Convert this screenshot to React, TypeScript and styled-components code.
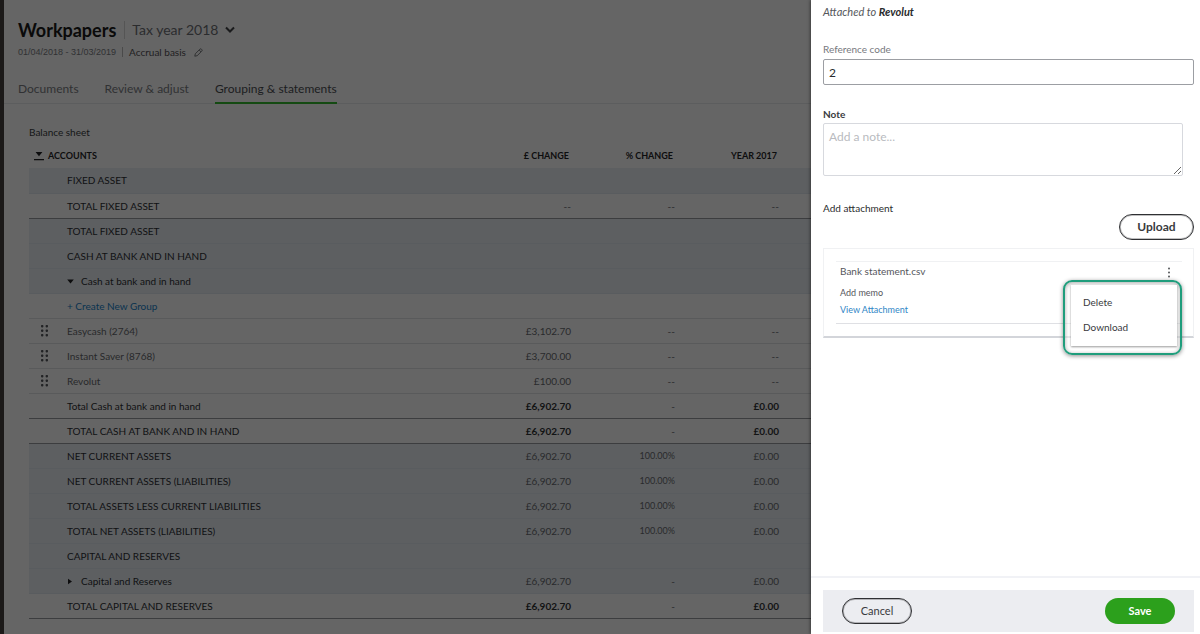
import React from 'react';
import styled, { createGlobalStyle, css } from 'styled-components';

const GlobalStyle = createGlobalStyle`
  * { box-sizing: border-box; }
  body {
    margin: 0;
    font-family: Lato, 'Liberation Sans', sans-serif;
    font-size: 10px;
    line-height: 16px;
    color: #2a2b2d;
  }
  button, input, textarea { font: inherit; color: inherit; }
`;

const Shell = styled.div`
  display: flex;
  min-height: 100vh;
  background: #656565;
`;

/* Dimmed page behind the drawer */
const Page = styled.main`
  flex: 1;
  min-width: 0;
  border-left: 4px solid #1b1918;
  color: #141516;
`;

const PageHeader = styled.header`
  padding: 18px 14px 0;
`;

const TitleRow = styled.div`
  display: flex;
  align-items: center;
  height: 24px;
`;

const Title = styled.h1`
  margin: 0;
  padding-right: 8px;
  font-size: 18px;
  line-height: 24px;
  font-weight: 700;
  color: #0a0a0a;
`;

const YearButton = styled.button`
  display: flex;
  align-items: center;
  gap: 7px;
  height: 18px;
  padding: 0 0 0 7px;
  border: 0;
  border-left: 1px solid #555;
  background: none;
  font-size: 14px;
  color: #2b2c2e;
`;

const MetaRow = styled.div`
  display: flex;
  align-items: center;
  height: 20px;
  color: #1f2022;
`;

const Period = styled.span`
  font-family: 'Liberation Sans', sans-serif;
  font-size: 9px;
  color: #303133;
`;

const Basis = styled.span`
  margin: 0 8px 0 6px;
  padding-left: 6px;
  border-left: 1px solid #4a4a4a;
  line-height: 10px;
`;

const IconButton = styled.button`
  display: flex;
  padding: 0;
  border: 0;
  background: none;
`;

const Tabs = styled.nav`
  display: flex;
  gap: 26px;
  height: 42px;
  padding: 0 14px;
  align-items: flex-end;
  border-bottom: 1px solid #5c5d5e;
`;

const Tab = styled.a<{ $active?: boolean }>`
  height: 24px;
  margin-bottom: -1px;
  font-size: 12px;
  line-height: 18px;
  text-decoration: none;
  color: #303133;
  ${p => p.$active && css`
    color: #1c1d1f;
    border-bottom: 2px solid #144a12;
  `}
`;

const Section = styled.section`
  padding: 20px 0 0 25px;
`;

const SectionTitle = styled.h2`
  margin: 0;
  font-size: 10px;
  line-height: 16px;
  font-weight: 400;
`;

const Sheet = styled.table`
  width: 100%;
  table-layout: fixed;
  border-collapse: collapse;
  margin-top: 3px;

  th, td { padding: 0; height: 25px; font-weight: 400; text-align: left; white-space: nowrap; }
`;

const Col = styled.col<{ $w?: number }>`
  width: ${p => (p.$w ? `${p.$w}px` : 'auto')};
`;

const HeadCell = styled.th`
  && { font-size: 9px; font-weight: 700; color: #0d0d0e; padding-right: 9px; }
  &&:not(:first-child) { text-align: right; }
`;

const HeadLabel = styled.span`
  display: flex;
  align-items: center;
  gap: 4px;
  padding-left: 5px;
`;

type Tone = 'band' | 'item' | 'total';

const Row = styled.tr<{ $tone: Tone; $rule?: boolean }>`
  background: ${p => (p.$tone === 'band' ? '#5d5f61' : 'transparent')};
  color: ${p => (p.$tone === 'item' ? '#28292b' : '#101113')};
  border-bottom: 1px solid ${p => (p.$rule ? '#3c3d3f' : p.$tone === 'band' ? '#595c5f' : '#595a5b')};
`;

const HandleCell = styled.td`
  && svg { display: block; margin-left: 12px; }
`;

const NameLabel = styled.span`
  display: flex;
  align-items: center;
  gap: 6px;
`;

const GroupLink = styled.a`
  color: #0a3350;
  text-decoration: none;
`;

const Amount = styled.td<{ $strong?: boolean; $small?: boolean }>`
  && {
    text-align: right;
    padding-right: 7px;
    font-weight: ${p => (p.$strong ? 700 : 400)};
    font-size: ${p => (p.$small ? 9 : 10)}px;
  }
  color: ${p => (p.$strong ? '#121314' : '#292a2c')};
`;

/* Drawer */
const Drawer = styled.aside`
  display: flex;
  flex-direction: column;
  flex: 0 0 389px;
  background: #fff;
  box-shadow: -1px 0 3px rgba(0, 0, 0, 0.4);
`;

const DrawerBody = styled.form`
  flex: 1;
  display: flex;
  flex-direction: column;
  padding: 4px 6px 0 12px;
`;

const Attached = styled.p`
  margin: 0 0 21px;
  font-size: 11px;
  font-style: italic;
  color: #55575b;
  b { color: #2a2b2d; }
`;

const FieldLabel = styled.label<{ $muted?: boolean }>`
  line-height: 16px;
  font-weight: ${p => (p.$muted ? 400 : 700)};
  color: ${p => (p.$muted ? '#77797e' : '#393a3d')};
`;

const TextInput = styled.input`
  height: 26px;
  margin: 2px 0 21px;
  padding: 0 5px;
  border: 1px solid #9c9ea3;
  border-radius: 2px;
  font-size: 12px;
  background: #fff;
`;

const NoteInput = styled.textarea`
  height: 53px;
  margin: 1px 11px 24px 0;
  padding: 4px 5px;
  border: 1px solid #d7d9de;
  border-radius: 2px;
  font-size: 12px;
  line-height: 17px;
  resize: vertical;
  &::placeholder { color: #b9bbc0; }
`;

const AttachTitle = styled.h3`
  margin: 0;
  font-size: 10px;
  line-height: 16px;
  font-weight: 400;
`;

const Pill = styled.button<{ $primary?: boolean; $wide?: boolean }>`
  width: ${p => (p.$wide ? 75 : 70)}px;
  height: 26px;
  padding: 0;
  border: ${p => (p.$primary ? '0' : '1px solid #2f3033')};
  box-shadow: ${p => (p.$primary ? 'none' : 'inset 0 0 0 1px rgba(47, 48, 51, 0.3)')};
  border-radius: 13px;
  background: ${p => (p.$primary ? '#2ca01c' : 'transparent')};
  color: ${p => (p.$primary ? '#fff' : '#393a3d')};
  font-size: ${p => (p.$wide ? 12 : 11)}px;
  font-weight: ${p => (p.$primary || p.$wide ? 700 : 400)};
`;

const UploadRow = styled.div`
  display: flex;
  justify-content: flex-end;
  margin: -2px 0 8px;
`;

const Card = styled.div`
  padding: 12px 11px 12px 12px;
  border: 1px solid #f0f1f3;
  border-bottom: 2px solid #d3d5da;
`;

const FileItem = styled.div`
  position: relative;
  display: flex;
  justify-content: space-between;
  padding: 0 9px 5px 4px;
  border-top: 1px solid #f0f1f3;
  border-bottom: 1px solid #dfe0e4;
`;

const FileInfo = styled.div`
  display: flex;
  flex-direction: column;
  align-items: flex-start;
`;

const FileName = styled.span`
  line-height: 18px;
  color: #55565c;
`;

const Memo = styled.button`
  margin-top: 4px;
  padding: 0;
  border: 0;
  background: none;
  font-size: 9px;
  line-height: 18px;
  color: #55565c;
`;

const FileLink = styled.a`
  font-size: 9px;
  line-height: 16px;
  color: #2f86c6;
  text-decoration: none;
`;

const MoreButton = styled(IconButton)`
  align-self: flex-start;
  margin-top: 5px;
`;

/* Highlighted menu that floats over the card */
const MenuFrame = styled.div`
  position: absolute;
  top: 18px;
  right: 0;
  width: 119px;
  padding: 3px 3px 7px 6px;
  border: 2px solid #1f9d7c;
  border-radius: 9px;
  background: rgba(255, 255, 255, 0.5);
  box-shadow: 0 1px 4px rgba(0, 0, 0, 0.45), inset 0 1px 4px rgba(0, 0, 0, 0.35);
`;

const Menu = styled.div`
  display: flex;
  flex-direction: column;
  padding: 4px 0 7px;
  background: #fff;
  box-shadow: 0 1px 2px rgba(0, 0, 0, 0.4);
`;

const MenuItem = styled.button`
  height: 25px;
  padding: 0 12px;
  border: 0;
  background: none;
  font-size: 10px;
  text-align: left;
  color: #393a3d;
`;

const DrawerFooter = styled.footer`
  padding: 12px 6px 2px 12px;
  border-top: 2px solid #f1f2f6;
`;

const Actions = styled.div`
  display: flex;
  align-items: center;
  justify-content: space-between;
  height: 42px;
  padding: 0 19px;
  background: #ecedf1;
`;

const Handle = () => (
  <svg width="8" height="12" viewBox="0 0 8 12" fill="#222325" aria-hidden="true">
    {[0, 4.5, 9].map(y => (
      <g key={y}>
        <rect x="0" y={y} width="2.4" height="2.4" rx="0.8" />
        <rect x="4.6" y={y} width="2.4" height="2.4" rx="0.8" />
      </g>
    ))}
  </svg>
);

const Caret = ({ open }: { open: boolean }) => (
  <svg width="8" height="8" viewBox="0 0 8 8" fill="#0d0d0e" aria-hidden="true">
    {open ? <path d="M0.2 2.5h6.6L3.5 6.6z" /> : <path d="M1 1.8v5.4L5 4.5z" />}
  </svg>
);

type RowData = {
  name: string;
  tone: Tone;
  rule?: boolean;
  handle?: boolean;
  caret?: 'open' | 'closed';
  link?: boolean;
  values?: [string, string, string];
};

const rows: RowData[] = [
  { name: 'FIXED ASSET', tone: 'band' },
  { name: 'TOTAL FIXED ASSET', tone: 'total', rule: true, values: ['--', '--', '--'] },
  { name: 'TOTAL FIXED ASSET', tone: 'band' },
  { name: 'CASH AT BANK AND IN HAND', tone: 'band' },
  { name: 'Cash at bank and in hand', tone: 'band', caret: 'open' },
  { name: '+ Create New Group', tone: 'item', link: true },
  { name: 'Easycash (2764)', tone: 'item', handle: true, values: ['£3,102.70', '--', '--'] },
  { name: 'Instant Saver (8768)', tone: 'item', handle: true, values: ['£3,700.00', '--', '--'] },
  { name: 'Revolut', tone: 'item', handle: true, values: ['£100.00', '--', '--'] },
  { name: 'Total Cash at bank and in hand', tone: 'total', rule: true, values: ['£6,902.70', '-', '£0.00'] },
  { name: 'TOTAL CASH AT BANK AND IN HAND', tone: 'total', rule: true, values: ['£6,902.70', '-', '£0.00'] },
  { name: 'NET CURRENT ASSETS', tone: 'band', values: ['£6,902.70', '100.00%', '£0.00'] },
  { name: 'NET CURRENT ASSETS (LIABILITIES)', tone: 'band', values: ['£6,902.70', '100.00%', '£0.00'] },
  { name: 'TOTAL ASSETS LESS CURRENT LIABILITIES', tone: 'band', values: ['£6,902.70', '100.00%', '£0.00'] },
  { name: 'TOTAL NET ASSETS (LIABILITIES)', tone: 'band', values: ['£6,902.70', '100.00%', '£0.00'] },
  { name: 'CAPITAL AND RESERVES', tone: 'band' },
  { name: 'Capital and Reserves', tone: 'band', caret: 'closed', values: ['£6,902.70', '-', '£0.00'] },
  { name: 'TOTAL CAPITAL AND RESERVES', tone: 'total', rule: true, values: ['£6,902.70', '-', '£0.00'] },
];

const SheetRow = ({ row }: { row: RowData }) => (
  <Row $tone={row.tone} $rule={row.rule}>
    <HandleCell>{row.handle && <Handle />}</HandleCell>
    <td>
      <NameLabel>
        {row.caret && <Caret open={row.caret === 'open'} />}
        {row.link ? <GroupLink href="#new-group">{row.name}</GroupLink> : row.name}
      </NameLabel>
    </td>
    {(row.values ?? ['', '', '']).map((value, i) => (
      <Amount key={i} $strong={row.tone === 'total' && value.startsWith('£')} $small={value.endsWith('%')}>
        {value}
      </Amount>
    ))}
    <td />
  </Row>
);

export default function App() {
  return (
    <>
      <GlobalStyle />
      <Shell>
        <Page>
          <PageHeader>
            <TitleRow>
              <Title>Workpapers</Title>
              <YearButton type="button">
                Tax year 2018
                <svg width="10" height="8" viewBox="0 0 10 8" fill="none" stroke="#1a1b1c" strokeWidth="2" aria-hidden="true">
                  <path d="M1 1.5l4 4 4-4" />
                </svg>
              </YearButton>
            </TitleRow>
            <MetaRow>
              <Period>01/04/2018 - 31/03/2019</Period>
              <Basis>Accrual basis</Basis>
              <IconButton type="button" aria-label="Edit basis">
                <svg width="9" height="9" viewBox="0 0 9 9" fill="none" stroke="#2b2c2e" strokeWidth="0.9" aria-hidden="true">
                  <path d="M0.8 8.2l0.5-2.4L5.9 1.2a1 1 0 0 1 1.5 0l0.4 0.4a1 1 0 0 1 0 1.5L3.2 7.7zM5.1 2l1.9 1.9" />
                </svg>
              </IconButton>
            </MetaRow>
          </PageHeader>
          <Tabs>
            <Tab href="#documents">Documents</Tab>
            <Tab href="#review">Review &amp; adjust</Tab>
            <Tab href="#grouping" $active>Grouping &amp; statements</Tab>
          </Tabs>
          <Section>
            <SectionTitle>Balance sheet</SectionTitle>
            <Sheet>
              <colgroup>
                <Col $w={38} />
                <Col />
                <Col $w={104} />
                <Col $w={104} />
                <Col $w={104} />
                <Col $w={25} />
              </colgroup>
              <thead>
                <tr>
                  <HeadCell colSpan={2}>
                    <HeadLabel>
                      <svg width="10" height="10" viewBox="0 0 10 10" fill="#0d0d0e" aria-hidden="true">
                        <path d="M1.6 1h6.8L5 5.2zM0 8h10v1.2h-10z" />
                      </svg>
                      ACCOUNTS
                    </HeadLabel>
                  </HeadCell>
                  <HeadCell>£ CHANGE</HeadCell>
                  <HeadCell>% CHANGE</HeadCell>
                  <HeadCell>YEAR 2017</HeadCell>
                  <HeadCell />
                </tr>
              </thead>
              <tbody>
                {rows.map((row, i) => <SheetRow key={i} row={row} />)}
              </tbody>
            </Sheet>
          </Section>
        </Page>

        <Drawer>
          <DrawerBody onSubmit={e => e.preventDefault()}>
            <Attached>Attached to <b>Revolut</b></Attached>
            <FieldLabel htmlFor="reference" $muted>Reference code</FieldLabel>
            <TextInput id="reference" type="text" defaultValue="2" />
            <FieldLabel htmlFor="note">Note</FieldLabel>
            <NoteInput id="note" placeholder="Add a note..." />
            <AttachTitle>Add attachment</AttachTitle>
            <UploadRow>
              <Pill type="button" $wide>Upload</Pill>
            </UploadRow>
            <Card>
              <FileItem>
                <FileInfo>
                  <FileName>Bank statement.csv</FileName>
                  <Memo type="button">Add memo</Memo>
                  <FileLink href="#attachment">View Attachment</FileLink>
                </FileInfo>
                <MoreButton type="button" aria-label="More actions">
                  <svg width="8" height="11" viewBox="0 0 8 11" fill="#55575b" aria-hidden="true">
                    <circle cx="4" cy="1.6" r="1" />
                    <circle cx="4" cy="5.5" r="1" />
                    <circle cx="4" cy="9.4" r="1" />
                  </svg>
                </MoreButton>
                <MenuFrame>
                  <Menu role="menu">
                    <MenuItem type="button" role="menuitem">Delete</MenuItem>
                    <MenuItem type="button" role="menuitem">Download</MenuItem>
                  </Menu>
                </MenuFrame>
              </FileItem>
            </Card>
          </DrawerBody>
          <DrawerFooter>
            <Actions>
              <Pill type="button">Cancel</Pill>
              <Pill type="button" $primary>Save</Pill>
            </Actions>
          </DrawerFooter>
        </Drawer>
      </Shell>
    </>
  );
}
